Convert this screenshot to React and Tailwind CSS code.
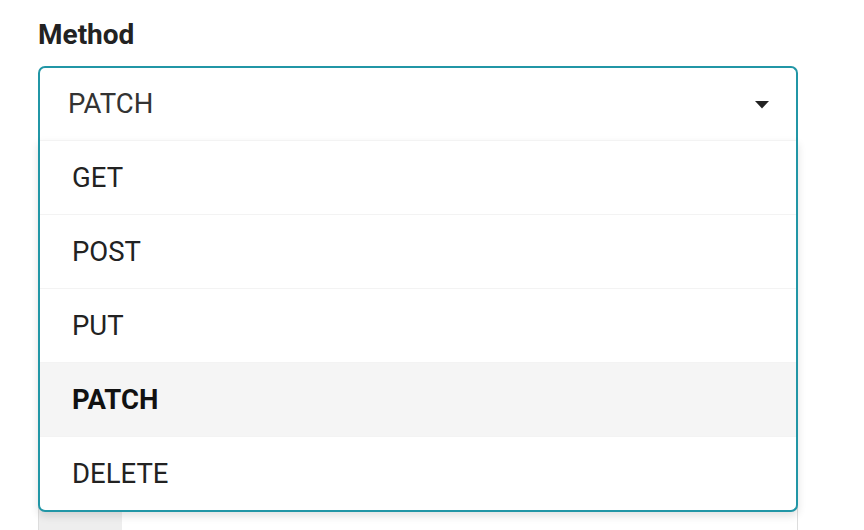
import React from "react";

const items = ["GET", "POST", "PUT", "PATCH", "DELETE"];

export default function App() {
  return (
    <div className="w-[864px] h-[530px] bg-white overflow-hidden font-['Roboto',sans-serif]">
      <div className="pl-[38px] pt-[18px]">
        <div className="text-[28px] leading-[34px] font-bold text-[#222]">Method</div>
        <div className="w-[760px] mt-[14px]">
          <div className="relative z-10">
            <div className="h-[74px] border-2 border-b-0 border-[#2196a6] rounded-t-[7px] bg-white flex items-center justify-between pl-[28px] pr-[27px]">
              <span className="text-[27.5px] text-[#333]">PATCH</span>
              <svg width="14" height="8" viewBox="0 0 14 8" className="mt-[1px]">
                <path d="M0 0 L14 0 L7 7.5 Z" fill="#222" />
              </svg>
            </div>
            <div className="absolute left-0 right-0 top-full border-2 border-t-0 border-[#2196a6] rounded-b-[7px] bg-white shadow-[0_4px_8px_rgba(0,0,0,0.12)]">
              {items.map((it) => (
                <div
                  key={it}
                  className={
                    it === "PATCH"
                      ? "h-[74px] border-t border-[#f3f3f3] bg-[#f5f5f5] flex items-center pl-[32px] text-[27.5px] font-bold text-[#111]"
                      : "h-[74px] border-t border-[#f3f3f3] flex items-center pl-[32px] text-[27.5px] text-[#222]"
                  }
                >
                  {it}
                </div>
              ))}
            </div>
          </div>
          <div className="mt-[30px] h-[420px] flex border border-[#ddd] rounded-[6px] overflow-hidden">
            <div className="w-[83px] bg-[#eeeeee]"></div>
            <div className="flex-1 bg-white"></div>
          </div>
        </div>
      </div>
    </div>
  );
}
